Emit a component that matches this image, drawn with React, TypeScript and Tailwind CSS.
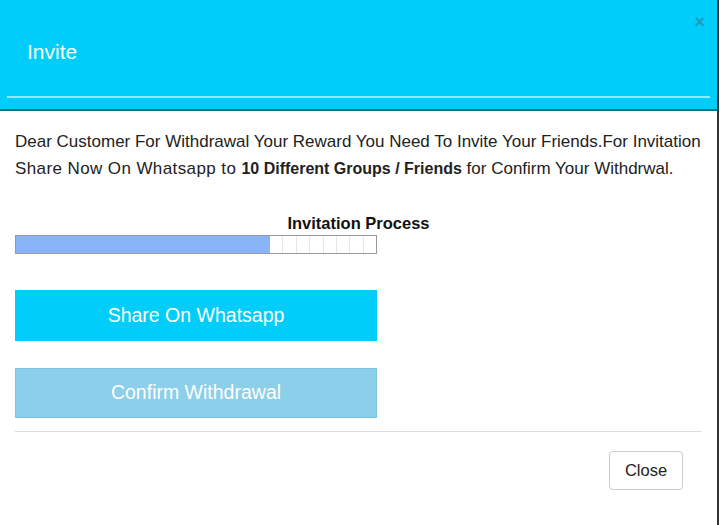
export default function App() {
  const segments = Array.from({ length: 8 });

  return (
    <div
      className="w-[720px] h-[525px] bg-white overflow-hidden"
      style={{ fontFamily: '"Liberation Sans", Arial, sans-serif' }}
    >
      <div className="w-[719px] h-full border-r-2 border-[#333] flex flex-col">
        {/* Header */}
        <div className="relative h-[111px] bg-[#00cdfa] border-b-2 border-[#0b6f8f] px-[7px] pt-[38px]">
          <button className="absolute top-[13px] right-[12px] text-[#1d9cbd] text-[18px] font-bold leading-none">
            ×
          </button>
          <h2 className="pl-5 text-white text-[21px] leading-[28px]">Invite</h2>
          <div className="mt-[30px] h-[2px] bg-[#8eecff]"></div>
        </div>

        {/* Body */}
        <div className="px-[15px] pt-[17px]">
          <div className="text-[17px] leading-[27px] text-[#222] whitespace-nowrap">
            <p>Dear Customer For Withdrawal Your Reward You Need To Invite Your Friends.For Invitation</p>
            <p>
              <span className="tracking-[0.4px]">Share Now On Whatsapp to </span>
              <b className="text-[16px]">10 Different Groups / Friends</b> for Confirm Your Withdrwal.
            </p>
          </div>

          <p className="mt-[31px] text-center font-bold text-[16.5px] text-[#111] leading-[20px]">
            Invitation Process
          </p>

          <div className="mt-[2px] w-[362px] h-[19px] border border-[#9a9a9a] flex">
            <div className="w-[254px] bg-[#8ab4f8]"></div>
            <div className="flex-1 flex bg-white">
              {segments.map((_, i) => (
                <div
                  key={i}
                  className="flex-1 border-r border-[#e6e6e6] last:border-r-0"
                ></div>
              ))}
            </div>
          </div>

          <button className="mt-[36px] w-[362px] h-[51px] bg-[#00cdfa] text-white text-[19.5px] flex items-center justify-center">
            Share On Whatsapp
          </button>

          <button className="mt-[27px] w-[362px] h-[50px] bg-[#8ccfea] border border-[#7ec3df] text-white text-[19.5px] flex items-center justify-center">
            Confirm Withdrawal
          </button>

          <div className="mt-[13px] w-[686px] h-px bg-[#dddddd]"></div>

          <div className="w-[686px] flex justify-end pt-[19px] pr-[18px]">
            <button className="w-[74px] h-[39px] border border-[#cccccc] rounded-[4px] text-[16.5px] text-[#222] bg-white">
              Close
            </button>
          </div>
        </div>
      </div>
    </div>
  );
}
